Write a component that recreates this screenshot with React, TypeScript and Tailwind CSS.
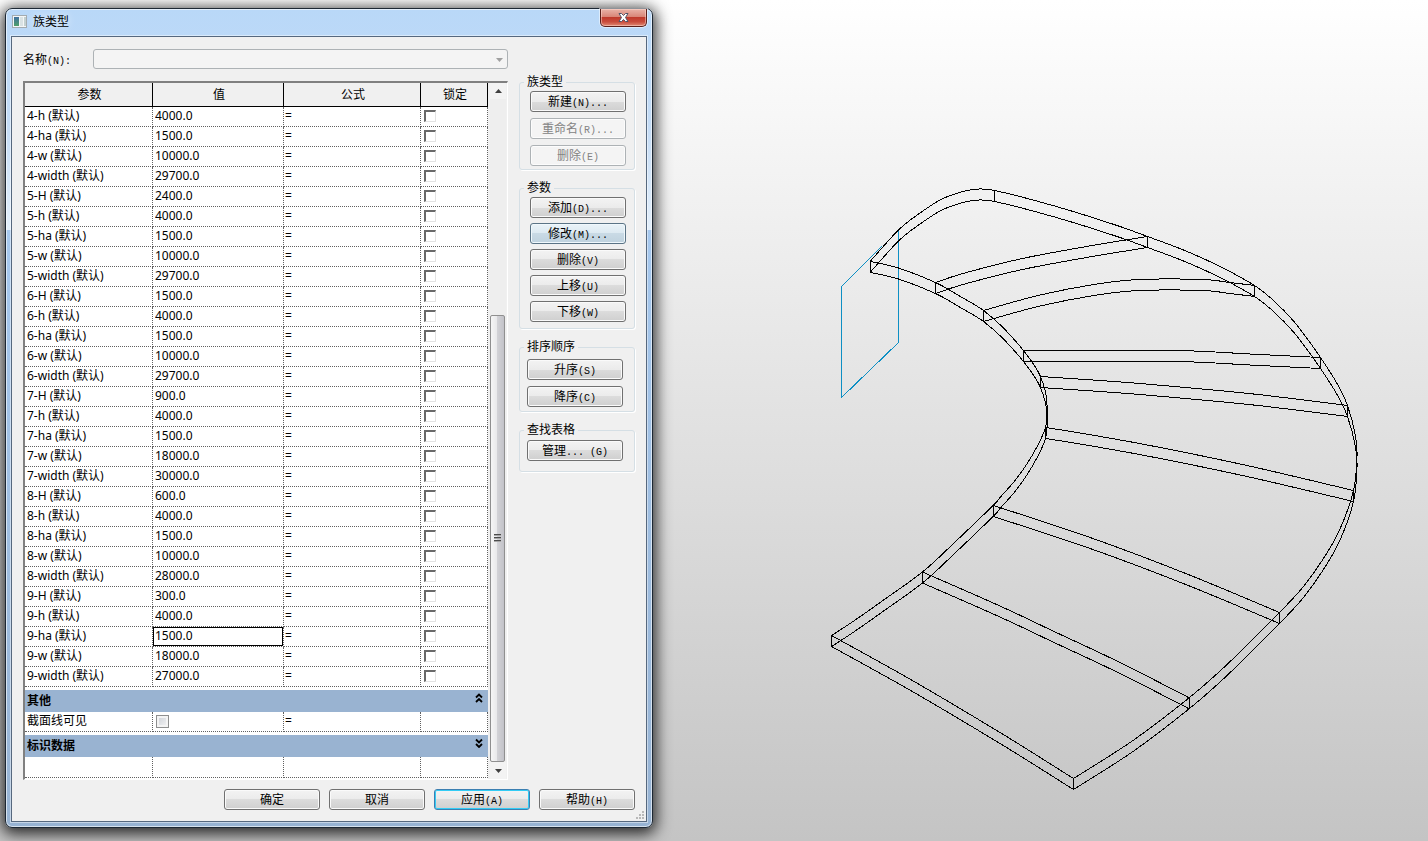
import { useState } from 'react';

type Param = { name: string; value: string };
type Point = [number, number];

const params: Param[] = [
    { name: '4-h (默认)', value: '4000.0' },
    { name: '4-ha (默认)', value: '1500.0' },
    { name: '4-w (默认)', value: '10000.0' },
    { name: '4-width (默认)', value: '29700.0' },
    { name: '5-H (默认)', value: '2400.0' },
    { name: '5-h (默认)', value: '4000.0' },
    { name: '5-ha (默认)', value: '1500.0' },
    { name: '5-w (默认)', value: '10000.0' },
    { name: '5-width (默认)', value: '29700.0' },
    { name: '6-H (默认)', value: '1500.0' },
    { name: '6-h (默认)', value: '4000.0' },
    { name: '6-ha (默认)', value: '1500.0' },
    { name: '6-w (默认)', value: '10000.0' },
    { name: '6-width (默认)', value: '29700.0' },
    { name: '7-H (默认)', value: '900.0' },
    { name: '7-h (默认)', value: '4000.0' },
    { name: '7-ha (默认)', value: '1500.0' },
    { name: '7-w (默认)', value: '18000.0' },
    { name: '7-width (默认)', value: '30000.0' },
    { name: '8-H (默认)', value: '600.0' },
    { name: '8-h (默认)', value: '4000.0' },
    { name: '8-ha (默认)', value: '1500.0' },
    { name: '8-w (默认)', value: '10000.0' },
    { name: '8-width (默认)', value: '28000.0' },
    { name: '9-H (默认)', value: '300.0' },
    { name: '9-h (默认)', value: '4000.0' },
    { name: '9-ha (默认)', value: '1500.0' },
    { name: '9-w (默认)', value: '18000.0' },
    { name: '9-width (默认)', value: '27000.0' },
];

// top edges of the ramp; every edge is repeated SLAB lower for the underside
const SLAB = 11;
const inner: Point[] = [
    [870.5, 261.5], [898.5, 268], [935.5, 282.5], [963, 298], [983.5, 310.5], [1003, 327.5],
    [1023.5, 350.5], [1035, 366.5], [1040.5, 376.5], [1045.5, 392], [1047, 405], [1045.5, 427.5],
    [1033, 454], [1017, 478], [1000, 497.5], [993.5, 505], [953, 544], [922.5, 572],
    [886.5, 598], [853, 621.5], [831.5, 635.5],
];
const outer: Point[] = [
    [870.5, 261], [898.5, 230], [920, 213], [943, 198.5], [967, 190.5], [980, 189],
    [994.5, 190.5], [1033, 200], [1076.5, 212.5], [1120, 226.5], [1147.5, 236.5], [1183.5, 250],
    [1220, 266.5], [1254.5, 285.5], [1273.5, 300.5], [1293.5, 321], [1310, 342.5],
    [1320.5, 357.5], [1336.5, 382.5], [1347.5, 405.5], [1355.5, 436], [1357, 457],
    [1353.5, 490.5], [1340, 529], [1323.5, 558.5], [1303.5, 586.5], [1279.5, 612.5],
    [1226.5, 665], [1189.5, 697.5], [1133, 740.5], [1073.5, 778.5],
];
const ribs: Point[][] = [
    [[935.5, 282.5], [963, 273.5], [1020, 259], [1086.5, 246.5], [1147.5, 236.5]],
    [[983.5, 310.5], [1040, 295], [1097, 284], [1140, 279.5], [1203, 279.5], [1230, 282.5], [1254.5, 285.5]],
    [[1023.5, 350.5], [1165, 350.5], [1205, 351.5], [1250, 354], [1320.5, 357.5]],
    [[1040.5, 376.5], [1100, 380.5], [1140, 383.5], [1213, 390], [1267, 395.5], [1347.5, 405.5]],
    [[1045.5, 427.5], [1083, 433.5], [1150, 445.5], [1247, 465.5], [1353.5, 490.5]],
    [[993.5, 505.5], [1093, 538.5], [1187, 574], [1279.5, 612.5]],
    [[922.5, 572], [1000, 606], [1053, 631], [1120, 662.5], [1189.5, 698]],
    [[831.5, 635.5], [911.5, 680], [1000, 732.5], [1073.5, 778.5]],
];

function smooth(points: Point[], dy: number) {
    let d = `M${points[0][0]} ${points[0][1] + dy}`;
    for (let i = 0; i < points.length - 1; i++) {
        const a = points[Math.max(i - 1, 0)];
        const b = points[i];
        const c = points[i + 1];
        const e = points[Math.min(i + 2, points.length - 1)];
        d += `C${b[0] + (c[0] - a[0]) / 6} ${b[1] + (c[1] - a[1]) / 6 + dy} `;
        d += `${c[0] - (e[0] - b[0]) / 6} ${c[1] - (e[1] - b[1]) / 6 + dy} `;
        d += `${c[0]} ${c[1] + dy}`;
    }
    return d;
}

function Viewport() {
    const curves = [inner, outer, ...ribs];
    const posts = [...ribs.flatMap((rib) => [rib[0], rib[rib.length - 1]]), inner[0], [994.5, 190.5] as Point];
    return (
        <svg
            viewBox="653 0 775 841"
            className="block w-full h-full"
            fill="none"
            strokeWidth="1"
            shapeRendering="crispEdges">
            <path d="M898.5 231V342.5L841.5 397.5V286.5L882 246" stroke="#0d8fc4" />
            <g stroke="#000">
                {curves.map((points, i) => (
                    <g key={i}>
                        <path d={smooth(points, 0)} />
                        <path d={smooth(points, SLAB)} />
                    </g>
                ))}
                {posts.map(([x, y], i) => (
                    <path key={i} d={`M${x} ${y}V${y + SLAB}`} />
                ))}
            </g>
        </svg>
    );
}

function Caption({ text, hot = '' }: { text: string; hot?: string }) {
    return (
        <>
            {text}
            {hot && <span className="font-['Liberation_Mono',monospace] text-[10px] leading-none">{hot}</span>}
        </>
    );
}

type PushProps = { text: string; hot?: string; look?: 'normal' | 'hover' | 'default' | 'disabled' };

function PushButton({ text, hot, look = 'normal' }: PushProps) {
    const looks = {
        normal: 'border-[#707070] bg-[linear-gradient(#f3f3f3,#ebebeb_50%,#dcdcdc_50%,#cfcfcf)] shadow-[inset_0_0_0_1px_#fafafa]',
        hover: 'border-[#5b7486] bg-[linear-gradient(#eaf3f8,#dce9f1_50%,#c9dae5_50%,#bfd2de)] shadow-[inset_0_0_0_1px_#f0f8fc]',
        default: 'border-[#3c7fb1] bg-[linear-gradient(#f3f3f3,#ebebeb_50%,#dcdcdc_50%,#cfcfcf)] shadow-[inset_0_0_0_1px_#33ccf5]',
        disabled: 'border-[#adb2b5] bg-[#f4f4f4] text-[#838383] shadow-[inset_0_0_0_1px_#fcfcfc]',
    };
    return (
        <button
            type="button"
            disabled={look === 'disabled'}
            className={`flex items-center justify-center w-24 h-[21px] pb-px rounded-[3px] border whitespace-nowrap ${looks[look]}`}>
            <span className="leading-4">
                <Caption text={text} hot={hot} />
            </span>
        </button>
    );
}

function Group({ title, className, children }: { title: string; className: string; children: React.ReactNode }) {
    return (
        <fieldset className="w-[116px] rounded-[3px] border border-[#d5dfe5] shadow-[1px_1px_0_#fff]">
            <legend className="ml-1 px-[3px] h-[14px] leading-3">{title}</legend>
            <div className={`flex flex-col ${className}`}>{children}</div>
        </fieldset>
    );
}

function SectionRow({ title, open }: { title: string; open: boolean }) {
    return (
        <>
            <tr className="h-[3px]">
                <td colSpan={4} />
            </tr>
            <tr className="h-[22px] bg-[#99b3d1]">
                <th colSpan={4} className="pl-[2px] pr-[5px] text-left font-bold leading-4">
                    <div className="flex items-start justify-between">
                        {title}
                        <button type="button" aria-label={title} aria-expanded={open}>
                            <svg width="8" height="10" viewBox="0 0 8 10" fill="none" stroke="#000" strokeWidth="1.8">
                                {open ? (
                                    <path d="M1 4.500L4 1.500L7 4.500M1 9L4 6L7 9" />
                                ) : (
                                    <path d="M1 1.500L4 4.500L7 1.500M1 6L4 9L7 6" />
                                )}
                            </svg>
                        </button>
                    </div>
                </th>
            </tr>
        </>
    );
}

const grid = 'border-r border-b border-dotted border-[#606060]';

function ParamTable() {
    const [values, setValues] = useState(params.map((p) => p.value));
    const [selected, setSelected] = useState(26);
    function change(index: number, value: string) {
        setValues(values.map((v, i) => (i === index ? value : v)));
    }
    return (
        <table className="table-fixed w-[463px] border-separate border-spacing-0 bg-white font-['Noto_Sans','Noto_Sans_CJK_SC',sans-serif] leading-4">
            <colgroup>
                <col className="w-[128px]" />
                <col className="w-[131px]" />
                <col className="w-[137px]" />
                <col className="w-[67px]" />
            </colgroup>
            <thead>
                <tr className="h-6 bg-[#f0f0f0]">
                    {['参数', '值', '公式', '锁定'].map((title) => (
                        <th key={title} className="border-r border-b border-black pl-[2px] font-normal">
                            {title}
                        </th>
                    ))}
                </tr>
            </thead>
            <tbody>
                {params.map((param, i) => (
                    <tr key={param.name} className="h-5">
                        <td className={`${grid} pl-[2px] pb-[2px]`}>{param.name}</td>
                        <td className={grid}>
                            <input
                                type="text"
                                aria-label={param.name}
                                value={values[i]}
                                onFocus={() => setSelected(i)}
                                onChange={(e) => change(i, e.target.value)}
                                className={`block w-full h-[19px] border px-px pb-[2px] outline-none ${
                                    selected === i ? 'border-black' : 'border-transparent'
                                }`}
                            />
                        </td>
                        <td className={`${grid} pl-px pb-[2px]`}>=</td>
                        <td className={`${grid} pl-[3px] pb-[2px]`}>
                            <input
                                type="checkbox"
                                aria-label={`锁定 ${param.name}`}
                                className="block appearance-none size-3 border-t-2 border-l-2 border-r border-b border-t-[#696969] border-l-[#696969] border-r-[#e3e3e3] border-b-[#e3e3e3] checked:bg-gray-500"
                            />
                        </td>
                    </tr>
                ))}
                <SectionRow title="其他" open={true} />
                <tr className="h-5">
                    <td className={`${grid} pl-[2px] pb-[2px]`}>
                        <label htmlFor="section-line">截面线可见</label>
                    </td>
                    <td className={`${grid} pl-[3px]`}>
                        <input
                            id="section-line"
                            type="checkbox"
                            disabled
                            className="block appearance-none size-[13px] border border-[#8e8f8f] bg-[linear-gradient(135deg,#cbcfd5,#f6f6f6)] shadow-[inset_0_0_0_2px_#f4f4f4]"
                        />
                    </td>
                    <td className={`${grid} pl-px pb-[2px]`}>=</td>
                    <td className={grid} />
                </tr>
                <SectionRow title="标识数据" open={false} />
                <tr className="h-[21px]">
                    <td className={grid} />
                    <td className={grid} />
                    <td className={grid} />
                    <td className={grid} />
                </tr>
            </tbody>
        </table>
    );
}

function ScrollBar() {
    return (
        <div className="flex flex-col w-4 ml-[2px] bg-[#eeeeee]">
            <button type="button" aria-label="向上滚动" className="flex items-center justify-center h-4 bg-[#f3f3f3]">
                <svg width="7" height="4" viewBox="0 0 7 4">
                    <path d="M0 4L3.500 0L7 4Z" fill="#404040" />
                </svg>
            </button>
            <div className="grow-[216] basis-0" />
            <div className="flex items-center justify-center grow-[446] basis-0 mr-px rounded-[2px] border border-[#8f8f8f] bg-[linear-gradient(90deg,#f6f6f6,#e9e9eb_45%,#d2d2d6_50%,#c2c2c8)]">
                <svg width="7" height="8" viewBox="0 0 7 8" shapeRendering="crispEdges">
                    <path d="M0 0H7V1H0ZM0 3H7V4H0ZM0 6H7V7H0Z" fill="#4c4c4c" />
                    <path d="M0 1H7V2H0ZM0 4H7V5H0ZM0 7H7V8H0Z" fill="#a8a8a8" />
                </svg>
            </div>
            <button type="button" aria-label="向下滚动" className="flex items-center justify-center h-[17px] bg-[#f3f3f3]">
                <svg width="7" height="4" viewBox="0 0 7 4">
                    <path d="M0 0L3.500 4L7 0Z" fill="#404040" />
                </svg>
            </button>
        </div>
    );
}

function TitleBar() {
    return (
        <header className="flex items-start justify-between h-[27px] pl-px">
            <div className="flex items-center gap-[5px] pt-[3px]">
                <svg width="16" height="16" viewBox="0 0 16 16" className="mt-px">
                    <defs>
                        <linearGradient id="pane" x1="0" y1="0" x2="0" y2="1">
                            <stop offset="0" stopColor="#3f6f9f" />
                            <stop offset="1" stopColor="#4fa06a" />
                        </linearGradient>
                    </defs>
                    <rect x="0.500" y="1.500" width="14" height="12" fill="#f4f6f6" stroke="#a3abb0" />
                    <rect x="2" y="3" width="5" height="9" fill="url(#pane)" />
                    <rect x="8" y="3" width="3" height="9" fill="#d9e2e4" />
                    <rect x="12" y="3" width="2" height="9" fill="#c3d0d0" />
                </svg>
                <h1 className="leading-[18px] [text-shadow:0_0_8px_#fff]">族类型</h1>
            </div>
            <button
                type="button"
                aria-label="关闭"
                className="flex items-center justify-center w-[47px] h-[18px] rounded-b-[5px] border border-t-0 border-[#5a1f1a] bg-[linear-gradient(#e9b3a8,#d98678_45%,#bf3a2c_50%,#c94c3c_75%,#e08a74)] shadow-[inset_0_0_0_1px_rgba(255,220,210,0.5),0_0_0_1px_rgba(255,255,255,0.5)]">
                <svg width="13" height="11" viewBox="0 0 13 11" fill="none">
                    <path d="M2 1.500H4.500L6.500 3.500L8.500 1.500H11L8.500 5.500L11 9.500H8.500L6.500 7.500L4.500 9.500H2L4.500 5.500Z" fill="#fff" stroke="#4f5468" />
                </svg>
            </button>
        </header>
    );
}

export default function App() {
    return (
        <div className="flex min-h-screen overflow-hidden bg-[linear-gradient(#ffffff,#c4c4c4)] font-['Noto_Sans_CJK_SC',sans-serif] text-xs text-black">
            <div
                role="dialog"
                aria-label="族类型"
                className="relative z-10 shrink-0 self-start mt-2 ml-[5px] mb-3 px-[5px] pb-[5px] rounded-[7px] border border-[#1c2733] bg-[linear-gradient(#b9d8f8,#c3dbf5_14%,#e3effb_27%,#a6c8ee_27%,#97b3d3)] shadow-[0_3px_15px_3px_rgba(0,0,0,0.8),inset_0_0_0_1px_rgba(255,255,255,0.6)]">
                <TitleBar />
                <div className="relative px-[11px] pt-3 pb-[11px] border border-[#56687e] bg-[#f0f0f0] shadow-[0_0_0_1px_rgba(255,255,255,0.45)]">
                    <div className="flex gap-[11px]">
                        <main>
                            <div className="flex items-center h-5">
                                <label htmlFor="type-name" className="w-[70px]">
                                    <Caption text="名称" hot="(N):" />
                                </label>
                                <div className="relative flex-1">
                                    <select
                                        id="type-name"
                                        disabled
                                        className="block appearance-none w-full h-5 rounded-[3px] border border-[#adb2b5] bg-[#f4f4f4]"
                                    />
                                    <svg width="7" height="4" viewBox="0 0 7 4" className="absolute right-[5px] top-[9px]">
                                        <path d="M0 0L3.500 4L7 0Z" fill="#a0a0a0" />
                                    </svg>
                                </div>
                            </div>
                            <div className="flex mt-3 border-t-2 border-l-2 border-r border-b border-t-[#808080] border-l-[#808080] border-r-white border-b-white bg-[#f0f0f0]">
                                <div className="bg-white pb-px">
                                    <ParamTable />
                                </div>
                                <ScrollBar />
                                <div className="w-px" />
                            </div>
                        </main>
                        <aside className="flex flex-col gap-[11px] pt-[26px]">
                            <Group title="族类型" className="gap-[6px] pl-[10px] pt-[2px] pb-[3px]">
                                <PushButton text="新建" hot="(N)..." />
                                <PushButton text="重命名" hot="(R)..." look="disabled" />
                                <PushButton text="删除" hot="(E)" look="disabled" />
                            </Group>
                            <Group title="参数" className="gap-[5px] pl-[10px] pt-[2px] pb-[6px]">
                                <PushButton text="添加" hot="(D)..." />
                                <PushButton text="修改" hot="(M)..." look="hover" />
                                <PushButton text="删除" hot="(V)" />
                                <PushButton text="上移" hot="(U)" />
                                <PushButton text="下移" hot="(W)" />
                            </Group>
                            <Group title="排序顺序" className="gap-[6px] pl-[7px] pt-[5px] pb-1">
                                <PushButton text="升序" hot="(S)" />
                                <PushButton text="降序" hot="(C)" />
                            </Group>
                            <Group title="查找表格" className="pl-[7px] pt-[3px] pb-[10px]">
                                <PushButton text="管理" hot="... (G)" />
                            </Group>
                        </aside>
                    </div>
                    <footer className="flex justify-end gap-[9px] mt-[9px]">
                        <PushButton text="确定" />
                        <PushButton text="取消" />
                        <PushButton text="应用" hot="(A)" look="default" />
                        <PushButton text="帮助" hot="(H)" />
                    </footer>
                    <svg
                        width="9"
                        height="9"
                        viewBox="0 0 9 9"
                        fill="#b8b8b8"
                        shapeRendering="crispEdges"
                        className="absolute right-px bottom-px">
                        <path d="M6 0H8V2H6ZM3 3H5V5H3ZM6 3H8V5H6ZM0 6H2V8H0ZM3 6H5V8H3ZM6 6H8V8H6Z" />
                    </svg>
                </div>
            </div>
            <section aria-label="三维视图" className="flex-1 min-w-0">
                <Viewport />
            </section>
        </div>
    );
}
